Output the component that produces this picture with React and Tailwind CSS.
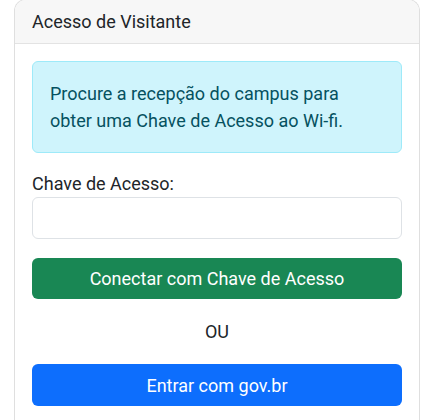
export default function App() {
  return (
    <div className="min-h-[420px] overflow-hidden bg-white font-['Roboto',sans-serif] text-[18px] leading-[27px] text-[#212529]">
      <div className="-mt-px ml-[14px] w-[406px] overflow-hidden rounded-t-[12px] border border-b-0 border-[#dfdfdf]">
        <div className="h-[44px] border-b border-[#e3e3e3] bg-[#f7f7f7] px-[17px] pt-[8px]">
          Acesso de Visitante
        </div>
        <div className="px-[17px] pt-[17px] pb-[18px]">
          <div className="rounded-[6px] border border-[#9eeaf9] bg-[#cff4fc] px-[17px] py-[18px] text-[#055160]">
            Procure a recepção do campus para obter uma Chave de Acesso ao Wi-fi.
          </div>
          <label className="mt-[17px] block">Chave de Acesso:</label>
          <input
            type="text"
            className="block h-[42px] w-full rounded-[6px] border border-[#dee2e6] bg-white px-[13px] outline-none"
          />
          <button className="mt-[19px] block h-[41px] w-full rounded-[6px] bg-[#198754] text-white">
            Conectar com Chave de Acesso
          </button>
          <p className="mt-[19px] text-center">OU</p>
          <button className="mt-[19px] block h-[42px] w-full rounded-[6px] bg-[#0d6efd] text-white">
            Entrar com gov.br
          </button>
        </div>
      </div>
    </div>
  );
}
